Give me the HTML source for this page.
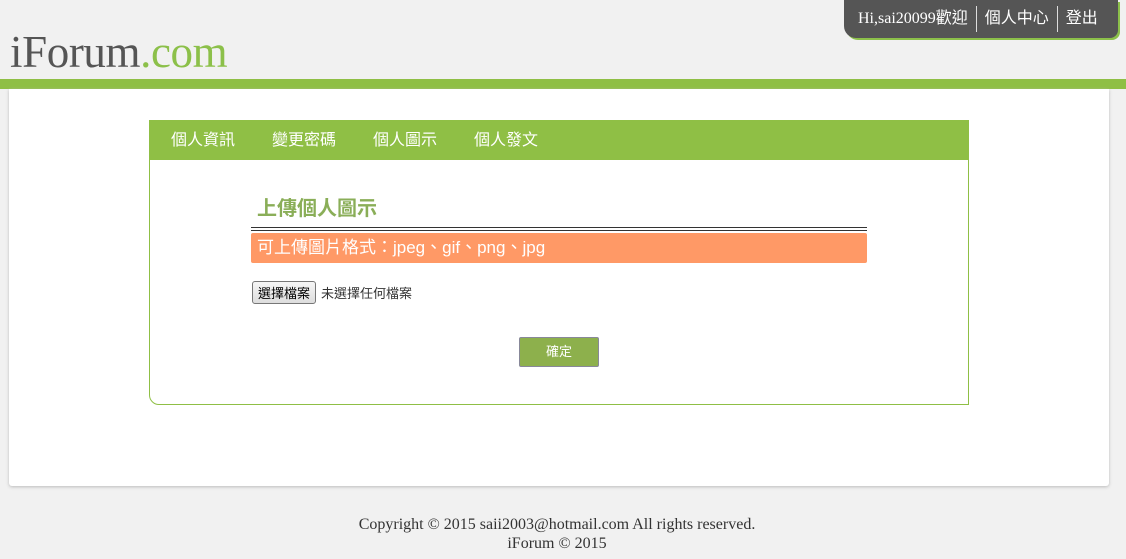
<!DOCTYPE html>
<html><head><meta charset="utf-8"><style>
*{margin:0;padding:0;box-sizing:border-box}
body{width:1126px;height:559px;background:#f1f1f1;font-family:"Liberation Serif","Noto Sans CJK TC",serif;position:relative;overflow:hidden}
.logo{position:absolute;left:10px;top:26px;font-size:45px;letter-spacing:-0.4px;color:#555;font-family:"Liberation Serif",serif}
.logo span{color:#8cc04a}
.user{position:absolute;left:844px;top:0;width:274px;height:38px;background:#555;border-radius:0 0 8px 12px;box-shadow:2px 2px 0 #8cc04a;color:#fff;font-size:16px;display:flex;align-items:center}
.user div{padding:0 8px;border-left:1px solid #ddd;line-height:26px}
.user div:first-child{border:none;padding-left:14px}
.bar{position:absolute;left:0;top:79px;width:1126px;height:10px;background:#8fbf45}
.panel{position:absolute;left:9px;top:89px;width:1100px;height:397px;background:#fff;box-shadow:0 1px 3px #bbb;border-radius:0 0 3px 3px}
.box{position:absolute;left:149px;top:120px;width:820px;height:285px;border:1px solid #8fbf45;border-radius:0 0 0 10px}
.tabs{height:39px;background:#8fbf45;color:#fff;font-size:16px;display:flex;align-items:center;padding-bottom:5px;font-family:"Liberation Sans","Noto Sans CJK TC",sans-serif}
.tabs span{margin-left:21px;margin-right:16px}
.title{position:absolute;left:257px;top:192px;font-size:20px;font-weight:bold;color:#8aae58;font-family:"Liberation Sans","Noto Sans CJK TC",sans-serif}
.dl{position:absolute;left:251px;top:227px;width:616px;height:4px;border-top:1px solid #333;border-bottom:1px solid #333}
.or{position:absolute;left:251px;top:233px;width:616px;height:30px;background:#ff9966;border-radius:2px;color:#fff;font-size:17px;line-height:30px;padding-left:6px;font-family:"Liberation Sans","Noto Sans CJK TC",sans-serif}
.file{position:absolute;left:252px;top:281px;font-size:13px;color:#333;font-family:"Liberation Sans","Noto Sans CJK TC",sans-serif;display:flex;align-items:center}
.file b{font-weight:normal;border:1px solid #777;border-radius:3px;background:linear-gradient(#f6f6f6,#ddd);padding:1px 5px;margin-right:5px;color:#000}
.ok{position:absolute;left:519px;top:337px;width:80px;height:30px;background:#8db04c;border:1px solid #889;border-radius:2px;color:#fff;font-size:13px;text-align:center;line-height:28px;font-family:"Liberation Sans","Noto Sans CJK TC",sans-serif}
.foot{position:absolute;left:0;top:515px;width:1114px;text-align:center;font-size:16px;color:#333;line-height:19px}
</style></head><body>
<div class="logo">iForum<span>.com</span></div>
<div class="user"><div>Hi,sai20099歡迎</div><div>個人中心</div><div>登出</div></div>
<div class="bar"></div>
<div class="panel"></div>
<div class="box"><div class="tabs"><span>個人資訊</span><span>變更密碼</span><span>個人圖示</span><span>個人發文</span></div></div>
<div class="title">上傳個人圖示</div>
<div class="dl"></div>
<div class="or">可上傳圖片格式：jpeg、gif、png、jpg</div>
<div class="file"><b>選擇檔案</b>未選擇任何檔案</div>
<div class="ok">確定</div>
<div class="foot">Copyright © 2015 saii2003@hotmail.com All rights reserved.<br>iForum © 2015</div>
</body></html>
